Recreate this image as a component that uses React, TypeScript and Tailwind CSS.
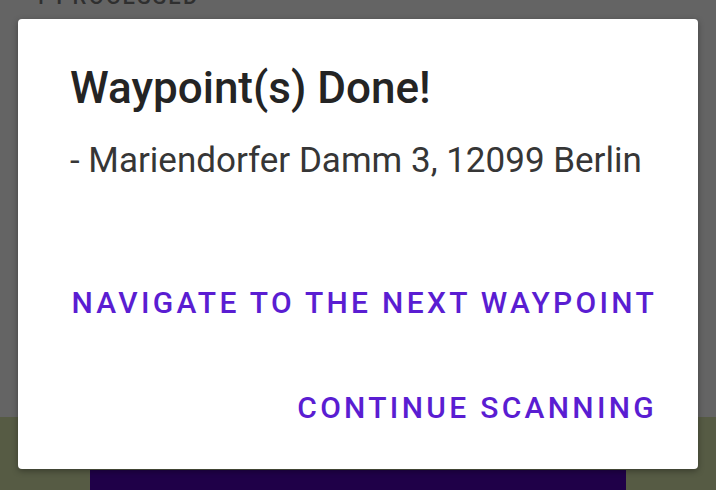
export default function App() {
  return (
    <div
      className="relative h-[490px] w-[716px] overflow-hidden bg-[#646464]"
      style={{ fontFamily: "Roboto, 'Liberation Sans', sans-serif" }}
    >
      {/* screen behind the scrim */}
      <div className="flex h-full flex-col">
        <div className="h-[417px] pl-[34px]">
          <p className="-mt-[14px] text-[22px] font-medium leading-[22px] tracking-[2.2px] text-[#2f2f2f]">
            1 PROCESSED
          </p>
        </div>
        <div className="flex flex-1 flex-col justify-end bg-[#565b44]">
          <div className="mx-[90px] h-[20px] bg-[#1f0048]" />
        </div>
      </div>

      {/* dialog */}
      <div className="absolute left-[18px] top-[19px] flex h-[450px] w-[680px] flex-col rounded-[4px] bg-white pl-[52px] pr-[41px] pt-[47px] shadow-[0_2px_6px_rgba(0,0,0,0.35)]">
        <h2 className="text-[44px] font-medium leading-[44px] text-[#242424]">
          Waypoint(s) Done!
        </h2>
        <p className="mt-[33px] text-[35px] leading-[35px] text-[#363636]">
          - Mariendorfer Damm 3, 12099 Berlin
        </p>
        <div className="mt-[110px] flex flex-col items-end gap-[75px]">
          <button className="text-[30px] font-medium leading-[30px] tracking-[3.3px] text-[#5a1dd2]">
            NAVIGATE TO THE NEXT WAYPOINT
          </button>
          <button className="text-[30px] font-medium leading-[30px] tracking-[3.3px] text-[#5a1dd2]">
            CONTINUE SCANNING
          </button>
        </div>
      </div>
    </div>
  );
}
